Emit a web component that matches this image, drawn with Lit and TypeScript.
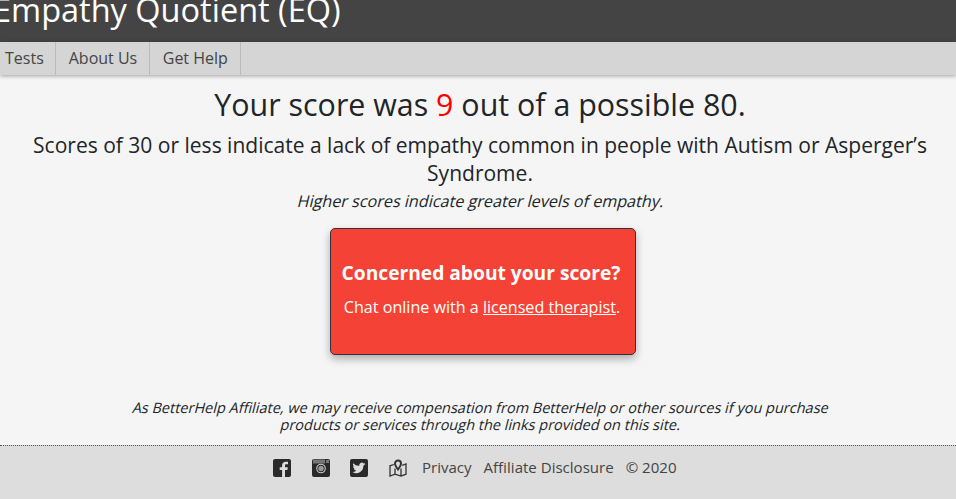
import { LitElement, html, css } from "lit";
import { customElement } from "lit/decorators.js";

@customElement("app-root")
export class AppRoot extends LitElement {
  static styles = css`
    :host {
      display: flex;
      flex-direction: column;
      height: 499px;
      overflow: hidden;
      background: #f5f5f5;
      color: #212529;
      font-family: "Open Sans", sans-serif;
    }
    .header {
      height: 42px;
      flex: none;
      background: #444;
      color: #fff;
      overflow: hidden;
      display: flex;
      align-items: flex-end;
    }
    .header h1 {
      margin: 0 0 10px -7px;
      font-size: 32.5px;
      font-weight: 400;
      line-height: 44px;
      white-space: nowrap;
    }
    .nav {
      height: 33px;
      flex: none;
      display: flex;
      background: #d5d5d5;
      box-shadow: 0 1px 4px rgba(0, 0, 0, 0.35);
      font-size: 16px;
      position: relative;
    }
    .nav a {
      display: flex;
      align-items: center;
      padding: 0 12px 2px 13px;
      color: #444;
      border-right: 1px solid #bbb;
    }
    .nav a:first-child {
      padding-left: 5px;
      padding-right: 11px;
    }
    .nav a:last-child {
      padding-left: 12.5px;
      padding-right: 12.5px;
    }
    .main {
      flex: 1;
      display: flex;
      flex-direction: column;
      align-items: center;
      text-align: center;
      padding: 12px 16px 0 20px;
    }
    .score {
      margin: 0;
      font-size: 30.4px;
      font-weight: 400;
      line-height: 36px;
    }
    .score span {
      color: #f00;
    }
    .desc {
      margin: 8px 0 0;
      font-size: 21.02px;
      line-height: 28px;
      max-width: 916px;
    }
    .higher {
      margin: 0 0 0 3px;
      font-size: 16.16px;
      line-height: 28px;
    }
    .slant {
      display: block;
      transform: skewX(-14deg);
      white-space: nowrap;
    }
    .card {
      margin: 13px 0 0 6px;
      box-sizing: border-box;
      width: 306px;
      height: 127px;
      padding: 0 2px 2px 0;
      background: #f44336;
      color: #fff;
      border: 1px solid #333;
      border-radius: 5px;
      box-shadow: 0 4px 8px rgba(0, 0, 0, 0.3);
      display: flex;
      flex-direction: column;
      justify-content: center;
      align-items: center;
    }
    .card strong {
      font-size: 19.2px;
      font-weight: 700;
      line-height: 27px;
      margin: -3px 2px 0 0;
    }
    .card p {
      margin: 9px 0 0;
      font-size: 16.1px;
      line-height: 24px;
    }
    .card a {
      color: #fff;
      text-decoration: underline;
    }
    .disclaimer {
      margin: 44px 0 0 2px;
      font-size: 14.5px;
      line-height: 17px;
    }
    .footer {
      height: 54px;
      flex: none;
      box-sizing: border-box;
      border-top: 1px dotted #555;
      background: #ddd;
      display: flex;
      justify-content: center;
      align-items: center;
      padding: 0 6px 10px 0;
      font-size: 15.05px;
      color: #444;
    }
    .icon {
      width: 18px;
      height: 18px;
      display: block;
      margin-right: 20.5px;
      fill: #2a2a2a;
    }
    .map {
      margin-right: 15px;
      fill: none;
      stroke: #333;
      stroke-width: 1.3;
    }
    .pin {
      stroke-width: 2;
    }
    .footer span {
      margin: 0 12px 2px 0;
    }
    .footer span:last-child {
      margin-right: 0;
    }
  `;

  render() {
    return html`
      <div class="header"><h1>Empathy Quotient (EQ)</h1></div>
      <div class="nav">
        <a>Tests</a><a>About Us</a><a>Get Help</a>
      </div>
      <div class="main">
        <h2 class="score">Your score was <span>9</span> out of a possible 80.</h2>
        <p class="desc">Scores of 30 or less indicate a lack of empathy common in people with Autism or Asperger’s Syndrome.</p>
        <p class="higher"><span class="slant">Higher scores indicate greater levels of empathy.</span></p>
        <div class="card">
          <strong>Concerned about your score?</strong>
          <p>Chat online with a <a>licensed therapist</a>.</p>
        </div>
        <p class="disclaimer">
          <span class="slant">As BetterHelp Affiliate, we may receive compensation from BetterHelp or other sources if you purchase</span>
          <span class="slant">products or services through the links provided on this site.</span>
        </p>
      </div>
      <div class="footer">
        <svg class="icon" viewBox="0 0 18 18"><path fill-rule="evenodd" d="M2 0h14a2 2 0 0 1 2 2v14a2 2 0 0 1-2 2h-4v-7h2.400l.4-2.800H12V6.600c0-.8.3-1.300 1.400-1.300H15V2.800c-.3 0-1.200-.1-2.200-.1-2.200 0-3.700 1.300-3.700 3.700v1.800H6.700V11h2.400v7H2a2 2 0 0 1-2-2V2a2 2 0 0 1 2-2z"/></svg>
        <svg class="icon" viewBox="0 0 18 18"><rect width="18" height="18" rx="2"/><path d="M1 0.500h12v4H1zM14 1h3v3h-3z" fill="#777"/><circle cx="9" cy="9.500" r="4.800" fill="#ccc"/><circle cx="9" cy="9.500" r="3.700" fill="#2a2a2a"/><circle cx="9" cy="9.500" r="2.700" fill="#999"/></svg>
        <svg class="icon" viewBox="0 0 18 18"><path fill-rule="evenodd" d="M2 0h14a2 2 0 0 1 2 2v14a2 2 0 0 1-2 2H2a2 2 0 0 1-2-2V2a2 2 0 0 1 2-2zm13.500 5a4.500 4.500 0 0 1-1.400.4 2.500 2.500 0 0 0 1.100-1.400 4.800 4.800 0 0 1-1.600.6 2.400 2.400 0 0 0-4.200 2.200A7 7 0 0 1 3.300 4.300a2.500 2.500 0 0 0 .8 3.300 2.300 2.300 0 0 1-1.100-.3c0 1.200.8 2.200 2 2.500a2.400 2.400 0 0 1-1.100 0c.3 1 1.200 1.700 2.300 1.700A5 5 0 0 1 2.500 13a7 7 0 0 0 10.800-6.200c.5-.4 1.700-1.300 2.200-1.800z"/></svg>
        <svg class="icon map" viewBox="0 0 18 18"><path d="M4.800 5.500 1 6.800V17l5-1.800 6 1.800 5-1.800V5l-3.800 1.300M6 15.200V9.500M12 17v-7.500"/><path class="pin" d="M9 1.500a3 3 0 0 0-3 3C6 6.500 9 10.500 9 10.500s3-4 3-6a3 3 0 0 0-3-3z"/></svg>
        <span>Privacy</span><span>Affiliate Disclosure</span><span>© 2020</span>
      </div>
    `;
  }
}
